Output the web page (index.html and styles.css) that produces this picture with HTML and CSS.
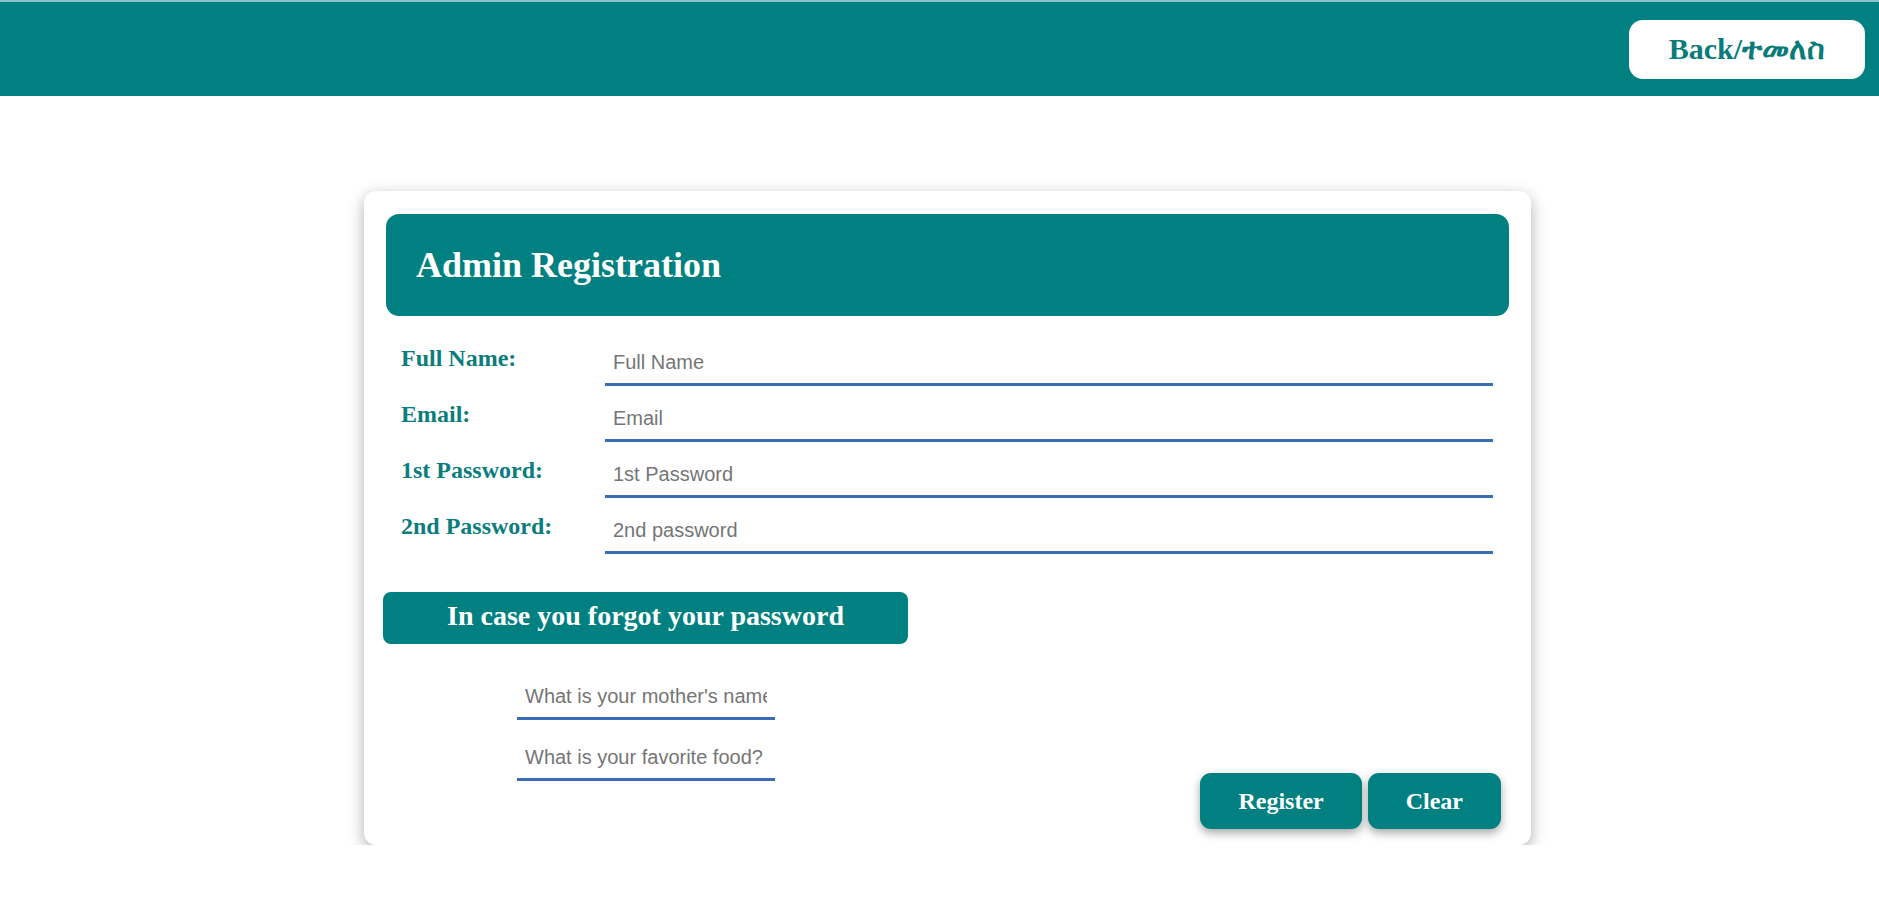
FILE: index.html
```html
<!DOCTYPE html>
<html lang="en">
<head>
<meta charset="utf-8">
<title>Admin Registration</title>
<link rel="stylesheet" href="styles.css">
</head>
<body>
<header class="topbar">
  <button class="back-btn" type="button">Back/ተመለስ</button>
</header>

<main class="card">
  <div class="card-header">
    <h1 class="card-title">Admin Registration</h1>
  </div>

  <form class="form">
    <div class="form-row">
      <label class="form-label">Full Name:</label>
      <input class="line-input" type="text" placeholder="Full Name">
    </div>
    <div class="form-row">
      <label class="form-label">Email:</label>
      <input class="line-input" type="email" placeholder="Email">
    </div>
    <div class="form-row">
      <label class="form-label">1st Password:</label>
      <input class="line-input" type="password" placeholder="1st Password">
    </div>
    <div class="form-row">
      <label class="form-label">2nd Password:</label>
      <input class="line-input" type="password" placeholder="2nd password">
    </div>
  </form>

  <div class="forgot-title">In case you forgot your password</div>

  <div class="bottom-row">
    <div class="security">
      <input class="line-input small" type="text" placeholder="What is your mother's name?">
      <input class="line-input small" type="text" placeholder="What is your favorite food?">
    </div>
    <div class="actions">
      <button class="action-btn" type="button">Register</button>
      <button class="action-btn" type="button">Clear</button>
    </div>
  </div>
</main>
</body>
</html>
```

FILE: styles.css
```css
* {
  box-sizing: border-box;
}

body {
  margin: 0;
  background: #ffffff;
  font-family: "Liberation Serif", "Times New Roman", "DejaVu Serif", serif;
}

.topbar {
  height: 96px;
  background: #008080;
  border-top: 2px solid #8cc4c4;
  display: flex;
  justify-content: flex-end;
  align-items: flex-start;
  padding: 18px 14px 0 0;
}

.back-btn {
  height: 59px;
  padding: 0 40px;
  background: #ffffff;
  color: #0a7b7b;
  border: none;
  border-radius: 14px;
  font-family: "Liberation Serif", "Times New Roman", "DejaVu Sans", serif;
  font-weight: bold;
  font-size: 30px;
  cursor: pointer;
}

.card {
  width: 1167px;
  margin: 95px 0 0 364px;
  background: #ffffff;
  border-radius: 12px;
  box-shadow: 0 5px 16px rgba(0, 0, 0, 0.32);
  padding: 23px 22px 16px 22px;
}

.card-header {
  background: #008080;
  border-radius: 13px;
  padding: 31px 30px 30px 30px;
}

.card-title {
  margin: 0;
  color: #ffffff;
  font-size: 36px;
  font-weight: bold;
  line-height: 41px;
}

.form {
  margin-top: 26px;
  padding: 0 16px 0 15px;
  display: flex;
  flex-direction: column;
  gap: 12px;
}

.form-row {
  display: flex;
  align-items: flex-start;
}

.form-label {
  width: 204px;
  flex: none;
  margin-top: 2px;
  color: #0b7d7d;
  font-size: 24px;
  font-weight: bold;
  line-height: 28px;
}

.line-input {
  flex: 1;
  height: 44px;
  border: none;
  border-bottom: 3px solid #3a6db8;
  padding: 0 8px;
  font-family: "Liberation Sans", Arial, sans-serif;
  font-size: 20px;
  color: #333333;
  background: transparent;
  outline: none;
}

.line-input::placeholder {
  color: #757575;
}

.forgot-title {
  width: 525px;
  height: 52px;
  margin: 38px 0 0 -3px;
  background: #008080;
  color: #ffffff;
  border-radius: 8px;
  font-size: 28px;
  font-weight: bold;
  line-height: 48px;
  text-align: center;
}

.bottom-row {
  display: flex;
  justify-content: space-between;
  align-items: flex-start;
}

.security {
  margin: 32px 0 0 131px;
  display: flex;
  flex-direction: column;
  gap: 17px;
}

.line-input.small {
  flex: none;
  width: 258px;
}

.actions {
  margin: 129px 8px 0 0;
  display: flex;
  gap: 6px;
}

.action-btn {
  height: 56px;
  padding: 0 38px;
  background: #008080;
  color: #ffffff;
  border: none;
  border-radius: 11px;
  box-shadow: 0 4px 10px rgba(0, 0, 0, 0.35);
  font-family: "Liberation Serif", "Times New Roman", serif;
  font-size: 24px;
  font-weight: bold;
  cursor: pointer;
}
```
